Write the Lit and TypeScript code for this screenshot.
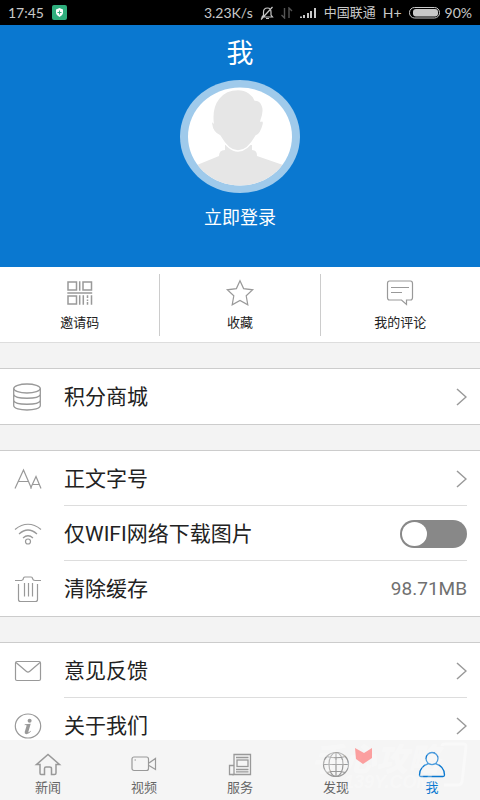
import { LitElement, html, css, svg, nothing } from "lit";
import { customElement, property, state } from "lit/decorators.js";
import { classMap } from "lit/directives/class-map.js";

const icons: Record<string, unknown> = {
  qr: svg`<g stroke-width="1.5">
    <rect x="2" y="3" width="8.500" height="8"/><rect x="17" y="3" width="8.500" height="8"/>
    <rect x="2" y="17" width="8.500" height="8"/>
    <path d="M13.700 2.300V11.700M1.300 14H26.200M13.700 16.300V25.700M17.300 16.300V25.700M25.500 16.300V25.700M21.500 16.300V19M21.500 20.500V22M21.500 23V25.700"/></g>`,
  star: svg`<path d="M14 1.800L17.600 9.600L26.700 10.800L20.200 16.800L21.800 25.800L14 21.400L6.200 25.800L7.800 16.800L1.300 10.800L10.400 9.600Z"/>`,
  comment: svg`<path d="M3.500 2H24.500Q26.500 2 26.500 4.500V18.500Q26.500 21 24.500 21H20.500V25.500L15.500 21H3.500Q1.500 21 1.500 18.500V4.500Q1.500 2 3.500 2ZM5 8.500H23M5 13.500H16"/>`,
  coins: svg`<g stroke-width="1.300"><ellipse cx="13" cy="5.500" rx="13.300" ry="4.500"/>
    <path d="M-.300 5.500V22.500C-.300 28.500 26.300 28.500 26.300 22.500V5.500M-.300 11.500C1 16.500 25 16.500 26.300 11.500M-.300 17.500C1 22.500 25 22.500 26.300 17.500"/></g>`,
  font: svg`<path d="M1 23.500L9.500 5L17.500 23.500M4.500 16.500H14.500M16.500 23.500L22 11.500L27 23.500M18.500 19.500H25.500"/>`,
  wifi: svg`<path d="M1 9.500Q14-1 27 9.500M5 14Q14 6 23 14M9 18Q14 13.500 19 18"/><circle cx="14" cy="21.500" r="2.500"/>`,
  trash: svg`<path d="M1 5.500H7.500Q9.500 5 9.500 3Q10 2 11 2H17Q18.500 2 18.500 3.500Q19 5.500 21 5.500H27M4.500 9V24.500Q4.500 26.500 6.500 26.500H21.500Q23.500 26.500 23.500 24.500V9M10.500 8V21.500M14.500 8V21.500M18.500 8V21.500"/>`,
  mail: svg`<rect x="1.500" y="4.500" width="25" height="19" rx="1.500"/><path d="M2 5.500L12.500 14.500Q14 15.800 15.500 14.500L26 5.500"/>`,
  info: svg`<ellipse cx="14" cy="14" rx="12.700" ry="12"/><circle cx="15.600" cy="8.700" r="2" fill="currentColor" stroke="none"/>
    <path fill="currentColor" stroke="none" d="M10.800 12.300L16.700 11.800L14.300 19.900Q14.200 20.600 15 20.200L16.500 18.800L17 19.300Q14.900 22.300 12.400 22.200Q10.200 22 10.700 20L12.500 14Q12.700 13 11.800 13.100L10.600 13.200Z"/>`,
  home: svg`<path stroke-width="1.500" d="M2.500 14.500H6V23Q6 24.500 7 24.500H10.500V18.500Q10.500 17 12 17H15.500Q17.500 17 17.500 18.500V24.500H20.500Q22 24.500 22 23V14.500H25.500L14 4.500Z"/>`,
  video: svg`<rect x="2" y="7" width="16.500" height="13.500" rx="2"/><path d="M4.500 10H6M19 13L25.500 8.500V19.500L19 15.500"/>`,
  paper: svg`<path stroke-width="1.300" d="M8 24.500V4.500H24.500V24.500H3.500V15.500H7.500M10 7.500H22.500M10 19.500H22.500M10 21.800H22.500M8 24.500Q8 25 6 24.500"/><rect x="11" y="10" width="11" height="6.500" stroke-width="1.300"/>`,
  globe: svg`<ellipse cx="14" cy="14.500" rx="12.500" ry="12"/><ellipse cx="14" cy="14.500" rx="7" ry="12"/><path d="M1.500 14.500H26.500M14 2.500V26.500M5 6.500Q14 9 23 6.500M5 22.500Q14 20 23 22.500"/>`,
  user: svg`<path stroke-width="1.300" d="M10.500 13.700Q8 11.500 8 8.500A6 6 0 0 1 20 8.500Q20 11.500 17.500 13.700Q26.500 16.500 26.500 25Q26.500 26.500 25 26.500H3Q1.500 26.500 1.500 25Q1.500 16.500 10.500 13.700ZM10.500 13.700Q14 15.500 17.500 13.700"/>`,
};

@customElement("line-icon")
class LineIcon extends LitElement {
  @property() name = "";
  static styles = css`
    :host { display: block; width: 28px; height: 28px; }
    svg { display: block; width: 28px; height: 28px; overflow: visible; fill: none; stroke: currentColor; stroke-width: 1.2; }
  `;
  render() {
    return html`<svg viewBox="0 0 28 28" aria-hidden="true">${icons[this.name]}</svg>`;
  }
}

@customElement("status-bar")
class StatusBar extends LitElement {
  static styles = css`
    :host { display: flex; align-items: center; height: 25px; padding: 0 8px; background: #000; color: #c8c8c8;
      font: 14px/25px Lato, "Noto Sans CJK SC", sans-serif; white-space: nowrap; }
    .badge { margin-left: 8px; }
    .right { display: flex; align-items: center; margin-left: auto; gap: 7px; }
    .carrier { font-size: 13px; }
    .battery { display: flex; align-items: center; gap: 4px; }
    svg { display: block; }
  `;
  render() {
    return html`
      <span>17:45</span>
      <svg class="badge" width="15" height="15"><rect width="15" height="15" rx="2" fill="#2fae7d"/><path d="M7.500 3L11 4.500V8Q11 10 7.500 12Q4 10 4 8V4.500Z" fill="#fff"/><path d="M7.500 5.500V9.500M5.500 7.500H9.500" stroke="#2fae7d"/></svg>
      <div class="right">
        <span>3.23K/s</span>
        <svg width="14" height="14" fill="none" stroke="#c8c8c8" stroke-width="1.200"><path d="M2 11L3.500 9V6Q3.500 2 7.500 2Q11 2 11 6V9L12.500 11ZM6 12.500H9M12.500 1L1 13.500"/></svg>
        <svg width="12" height="12" fill="none" stroke="#555" stroke-width="1.400"><path d="M3.500 1V11L.500 8M8 11V1L11 4"/></svg>
        <svg width="17" height="12" fill="#c8c8c8"><path d="M0 9.500H2V11H0ZM3 8H5V11H3ZM7 6H9V11H7ZM10 4H12V11H10ZM14 1H16V11H14Z"/></svg>
        <span class="carrier">中国联通</span>
        <span>H+</span>
        <span class="battery">
          <svg width="32" height="12"><rect x=".500" y=".500" width="30" height="10.500" rx="5" fill="none" stroke="#c8c8c8"/><rect x="4" y="2" width="25" height="7.500" rx="3" fill="#c8c8c8"/></svg>
          <span>90%</span>
        </span>
      </div>`;
  }
}

@customElement("setting-row")
class SettingRow extends LitElement {
  @property() icon = "";
  @property() label = "";
  @property() value = "";
  @property({ type: Boolean }) toggle = false;
  static styles = css`
    :host { display: block; }
    .row { display: flex; align-items: center; box-sizing: border-box; width: 100%; height: 55px; padding: 0 13px 0 14px;
      border: 0; background: none; color: #222; text-align: left; font: 21px/30px Roboto, "Noto Sans CJK SC", sans-serif; }
    line-icon { flex: none; margin-right: 22px; color: #999; }
    .label { flex: 1; }
    .value { color: #707070; font-size: 19px; }
    .chevron { display: block; fill: none; stroke: #999; stroke-width: 1.500; }
    .switch { appearance: none; display: flex; align-items: center; box-sizing: border-box; width: 67px; height: 28px;
      margin: 0; padding: 2px; border-radius: 14px; background: #888; }
    .switch::before { content: ""; width: 25px; height: 24px; border-radius: 50%; background: #fff; }
    .switch:checked { justify-content: flex-end; background: #0a78d0; }
  `;
  render() {
    if (this.toggle) {
      return html`<label class="row"><line-icon name=${this.icon}></line-icon><span class="label">${this.label}</span>
        <input class="switch" type="checkbox" role="switch"></label>`;
    }
    return html`<button class="row"><line-icon name=${this.icon}></line-icon><span class="label">${this.label}</span>
      ${this.value
        ? html`<span class="value">${this.value}</span>`
        : html`<svg class="chevron" width="11" height="18" aria-hidden="true"><path d="M1 1L10 9L1 17"/></svg>`}
    </button>`;
  }
}

@customElement("app-root")
class AppRoot extends LitElement {
  @state() private current = "user";

  private shortcuts = [["qr", "邀请码"], ["star", "收藏"], ["comment", "我的评论"]];
  private groups = [
    [{ icon: "coins", label: "积分商城" }],
    [
      { icon: "font", label: "正文字号" },
      { icon: "wifi", label: "仅WIFI网络下载图片", toggle: true },
      { icon: "trash", label: "清除缓存", value: "98.71MB" },
    ],
    [{ icon: "mail", label: "意见反馈" }, { icon: "info", label: "关于我们" }],
  ];
  private tabs = [["home", "新闻"], ["video", "视频"], ["paper", "服务"], ["globe", "发现"], ["user", "我"]];

  static styles = css`
    :host { display: flex; flex-direction: column; height: 100vh; overflow: hidden; background: #f3f3f3; color: #222;
      font: 13px/20px Roboto, "Noto Sans CJK SC", sans-serif; }
    status-bar, .tabs { flex: none; }
    main { flex: 1; min-height: 0; overflow-y: auto; scrollbar-width: none; }
    .profile { display: flex; flex-direction: column; align-items: center; box-sizing: border-box; height: 242px; padding-top: 9px;
      background: #0a78d0; color: #fff; }
    h1 { margin: 0; font-size: 27px; line-height: 40px; font-weight: 400; }
    .login { display: flex; flex-direction: column; align-items: center; gap: 10px; margin-top: 6px; padding: 0; border: 0;
      background: none; color: inherit; font: inherit; font-size: 18px; line-height: 30px; }
    .avatar { display: block; }
    .shortcuts { display: flex; align-items: center; height: 75px; background: #fff; border-bottom: 1px solid #ddd; }
    .shortcut { flex: 1; display: flex; flex-direction: column; align-items: center; justify-content: flex-end; gap: 6px;
      height: 62px; padding: 0 0 3px; border: 0; border-left: 1px solid #ccc; background: none; color: #222; font: inherit; }
    .shortcut:first-child { border-left: 0; }
    .shortcut line-icon { color: #999; }
    .group { margin-top: 25px; background: #fff; border: solid #ccc; border-width: 1px 0; }
    .group setting-row + setting-row::before { content: ""; display: block; height: 1px; margin: -1px 13px 0 64px; background: #ddd; }
    .tabs { position: relative; display: flex; height: 60px; background: #f5f5f5; }
    .tab { flex: 1; display: flex; flex-direction: column; align-items: center; padding-top: 10px; color: #666; text-decoration: none; }
    .tab line-icon { color: #999; }
    .tab.active, .tab.active line-icon { color: #0a78d0; }
    .mark { position: absolute; right: 8px; bottom: 0; display: block; overflow: visible; pointer-events: none; }
    .mark-name { font: italic 900 32px "Noto Sans CJK SC", sans-serif; }
    .mark-site { font: italic 700 18px "Liberation Sans", sans-serif; }
  `;

  render() {
    return html`
      <status-bar></status-bar>
      <main>
        <section class="profile">
          <h1>我</h1>
          <button class="login">
            <svg class="avatar" width="120" height="113" viewBox="0 0 120 113" aria-hidden="true">
              <defs><clipPath id="face"><ellipse cx="60" cy="56.500" rx="52" ry="49"/></clipPath></defs>
              <ellipse cx="60" cy="56.500" rx="60" ry="56.500" fill="#9fcaeb"/>
              <ellipse cx="60" cy="56.500" rx="52" ry="49" fill="#fff"/>
              <g clip-path="url(#face)" fill="#e6e6e6">
                <path d="M45 65V70Q39 70 39 76L17 85V113H103V85L77 76Q77 70 72 70V65Z"/>
                <path stroke="#fff" stroke-width="1.500" d="M33 42C31 22 42 9.500 58 9.500C67 9.500 73 15 75 20C82 20 84 28 83 33C83 37 81 39 81 41Q84 40 83.500 44C82 50 80 55 76 56C72 63 66 71 58 71C50 71 44 63 40 56C36 54 32 50 31.500 44Q31 40 33 42Z"/>
              </g>
            </svg>
            <span>立即登录</span>
          </button>
        </section>
        <section class="shortcuts">
          ${this.shortcuts.map(([icon, label]) => html`<button class="shortcut"><line-icon name=${icon}></line-icon><span>${label}</span></button>`)}
        </section>
        ${this.groups.map((rows) => html`<section class="group">
          ${rows.map((r: any) => html`<setting-row icon=${r.icon} label=${r.label} value=${r.value ?? ""} ?toggle=${r.toggle}></setting-row>`)}
        </section>`)}
      </main>
      <nav class="tabs">
        ${this.tabs.map(([icon, label]) => html`<a href="#${icon}" class=${classMap({ tab: true, active: icon === this.current })}
          aria-current=${icon === this.current ? "page" : nothing} @click=${() => (this.current = icon)}>
          <line-icon name=${icon}></line-icon><span>${label}</span></a>`)}
        <svg class="mark" width="164" height="60" aria-hidden="true">
          <g fill="#fff" fill-opacity=".3">
            <text class="mark-name" x="4" y="31">手心攻略</text>
            <text class="mark-site" x="36" y="48">139Y.COM</text>
          </g>
          <path d="M134 6Q134 4 137 4H156Q158 4 158 7L154 42Q153 45 150 45H136" fill="none" stroke="#fff" stroke-opacity=".4" stroke-width="3"/>
          <path d="M47 8L56 13L64 8V18L55 24L48 19Z" fill="#f66" fill-opacity=".6"/>
        </svg>
      </nav>`;
  }
}
